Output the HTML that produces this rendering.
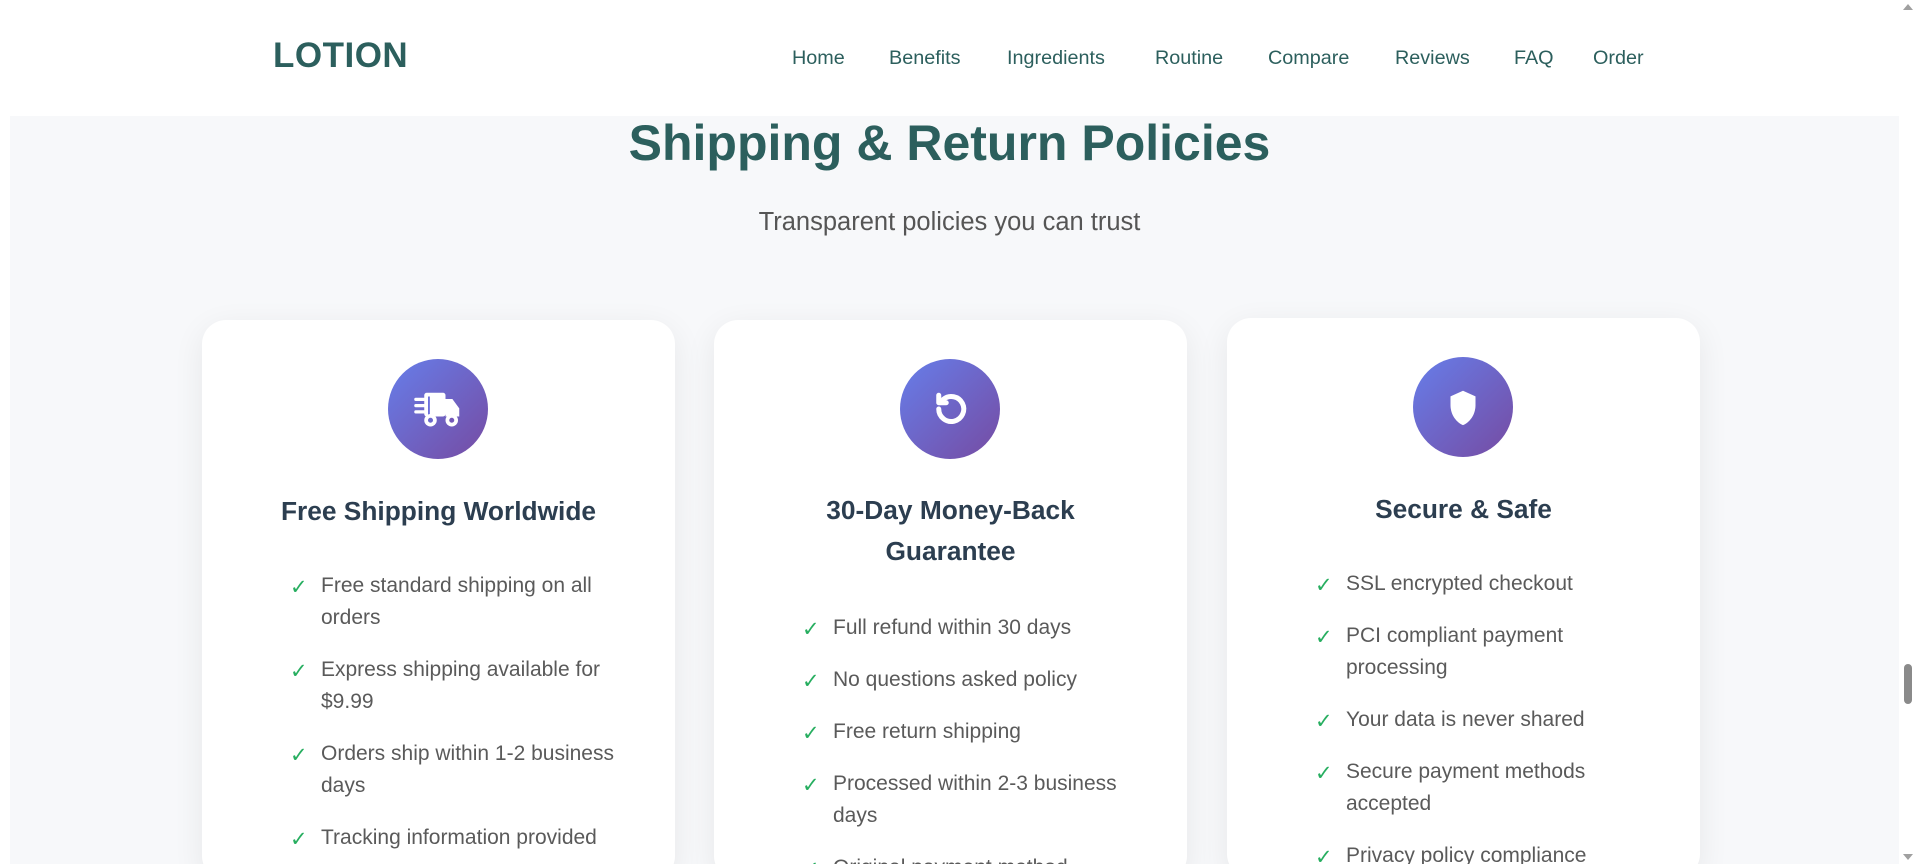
<!DOCTYPE html>
<html><head><meta charset="utf-8"><style>
*{margin:0;padding:0;box-sizing:border-box}
html,body{width:1917px;height:864px;overflow:hidden}
body{background:#fff;font-family:"Liberation Sans",sans-serif;position:relative}
.hdr{position:absolute;left:0;top:0;width:1899px;height:116px;background:#fff}
.logo{position:absolute;left:273px;top:36px;font-size:35px;font-weight:bold;color:#2c5f5d;letter-spacing:0.5px}
.nav{position:absolute;top:47px;font-size:19.8px;color:#2c5f5d}
.sec{position:absolute;left:10px;top:116px;width:1889px;height:748px;background:#f7f8fa}
h1{position:absolute;left:0;width:1899px;top:114px;text-align:center;font-size:50px;font-weight:bold;color:#2c5f5d}
.sub{position:absolute;left:0;width:1899px;top:208px;text-align:center;font-size:25.5px;color:#555}
.card{position:absolute;width:473px;height:560px;background:#fff;border-radius:24px;box-shadow:0 8px 32px rgba(0,0,0,0.07)}
.ic{position:absolute;left:186px;top:39px;width:100px;height:100px;border-radius:50%;background:linear-gradient(135deg,#667eea,#764ba2)}
.ic svg{position:absolute;left:25px;top:25px}
.t{position:absolute;left:0;width:100%;text-align:center;font-size:26.3px;font-weight:bold;color:#2c3e50;line-height:41px}
ul{position:absolute;left:88px;list-style:none}
li{position:relative;padding-left:31px;font-size:21px;line-height:32px;color:#5a5a5a;white-space:nowrap;margin-bottom:20px}
li:before{content:"✓";position:absolute;left:0;top:1px;color:#27ae60;font-family:"DejaVu Sans",sans-serif;font-size:21px;font-weight:bold}
.sb{position:absolute;left:1899px;top:0;width:18px;height:864px;background:#fff}
</style></head><body>
<div class="hdr">
<div class="logo">LOTION</div>
<span class="nav" style="left:792px">Home</span>
<span class="nav" style="left:889px">Benefits</span>
<span class="nav" style="left:1007px">Ingredients</span>
<span class="nav" style="left:1155px">Routine</span>
<span class="nav" style="left:1268px">Compare</span>
<span class="nav" style="left:1395px">Reviews</span>
<span class="nav" style="left:1514px">FAQ</span>
<span class="nav" style="left:1593px">Order</span>
</div>
<div class="sec"></div>
<h1>Shipping &amp; Return Policies</h1>
<div class="sub">Transparent policies you can trust</div>

<div class="card" style="left:202px;top:320px">
<div class="ic"><svg width="50" height="50" viewBox="0 0 40 40" fill="#fff"><rect x="9" y="7" width="17" height="19" rx="2"/><path d="M26 12h5.5l5.5 7.5V26H26z"/><rect x="1" y="11" width="11" height="2.6" rx="1.2"/><rect x="1" y="16" width="11" height="2.6" rx="1.2"/><rect x="1" y="21" width="11" height="2.6" rx="1.2"/><rect x="12" y="10" width="1.5" height="15" fill="#6c70dc"/><circle cx="14" cy="29" r="5"/><circle cx="31" cy="29" r="5"/><circle cx="14" cy="29" r="2" fill="#6c68cc"/><circle cx="31" cy="29" r="2" fill="#7458b8"/></svg></div>
<div class="t" style="top:171px">Free Shipping Worldwide</div>
<ul style="top:250px">
<li>Free standard shipping on all<br>orders</li>
<li>Express shipping available for<br>$9.99</li>
<li>Orders ship within 1-2 business<br>days</li>
<li>Tracking information provided</li>
</ul></div>

<div class="card" style="left:714px;top:320px">
<div class="ic"><svg width="50" height="50" viewBox="0 0 40 40" fill="none" stroke="#fff" stroke-width="4" stroke-linecap="round"><path d="M11 20a10 10 0 1 0 3.5-7.6"/><path d="M11 9v6h6" stroke-linejoin="round"/></svg></div>
<div class="t" style="top:170px">30-Day Money-Back<br>Guarantee</div>
<ul style="top:292px">
<li>Full refund within 30 days</li>
<li>No questions asked policy</li>
<li>Free return shipping</li>
<li>Processed within 2-3 business<br>days</li>
<li>Original payment method</li>
</ul></div>

<div class="card" style="left:1227px;top:318px">
<div class="ic"><svg width="50" height="50" viewBox="0 0 40 40" fill="#fff"><path d="M20 7l10 4.5v7c0 8-5 14-10 16-5-2-10-8-10-16v-7z"/></svg></div>
<div class="t" style="top:171px">Secure &amp; Safe</div>
<ul style="top:250px">
<li>SSL encrypted checkout</li>
<li>PCI compliant payment<br>processing</li>
<li>Your data is never shared</li>
<li>Secure payment methods<br>accepted</li>
<li>Privacy policy compliance</li>
</ul></div>

<div class="sb">
<div style="position:absolute;left:4px;top:4px;width:0;height:0;border-left:5px solid transparent;border-right:5px solid transparent;border-bottom:6px solid #a0a0a0"></div>
<div style="position:absolute;left:5px;top:664px;width:8px;height:40px;border-radius:4px;background:#8a8a8a"></div>
<div style="position:absolute;left:4px;bottom:4px;width:0;height:0;border-left:5px solid transparent;border-right:5px solid transparent;border-top:6px solid #a0a0a0"></div>
</div>
</body></html>
